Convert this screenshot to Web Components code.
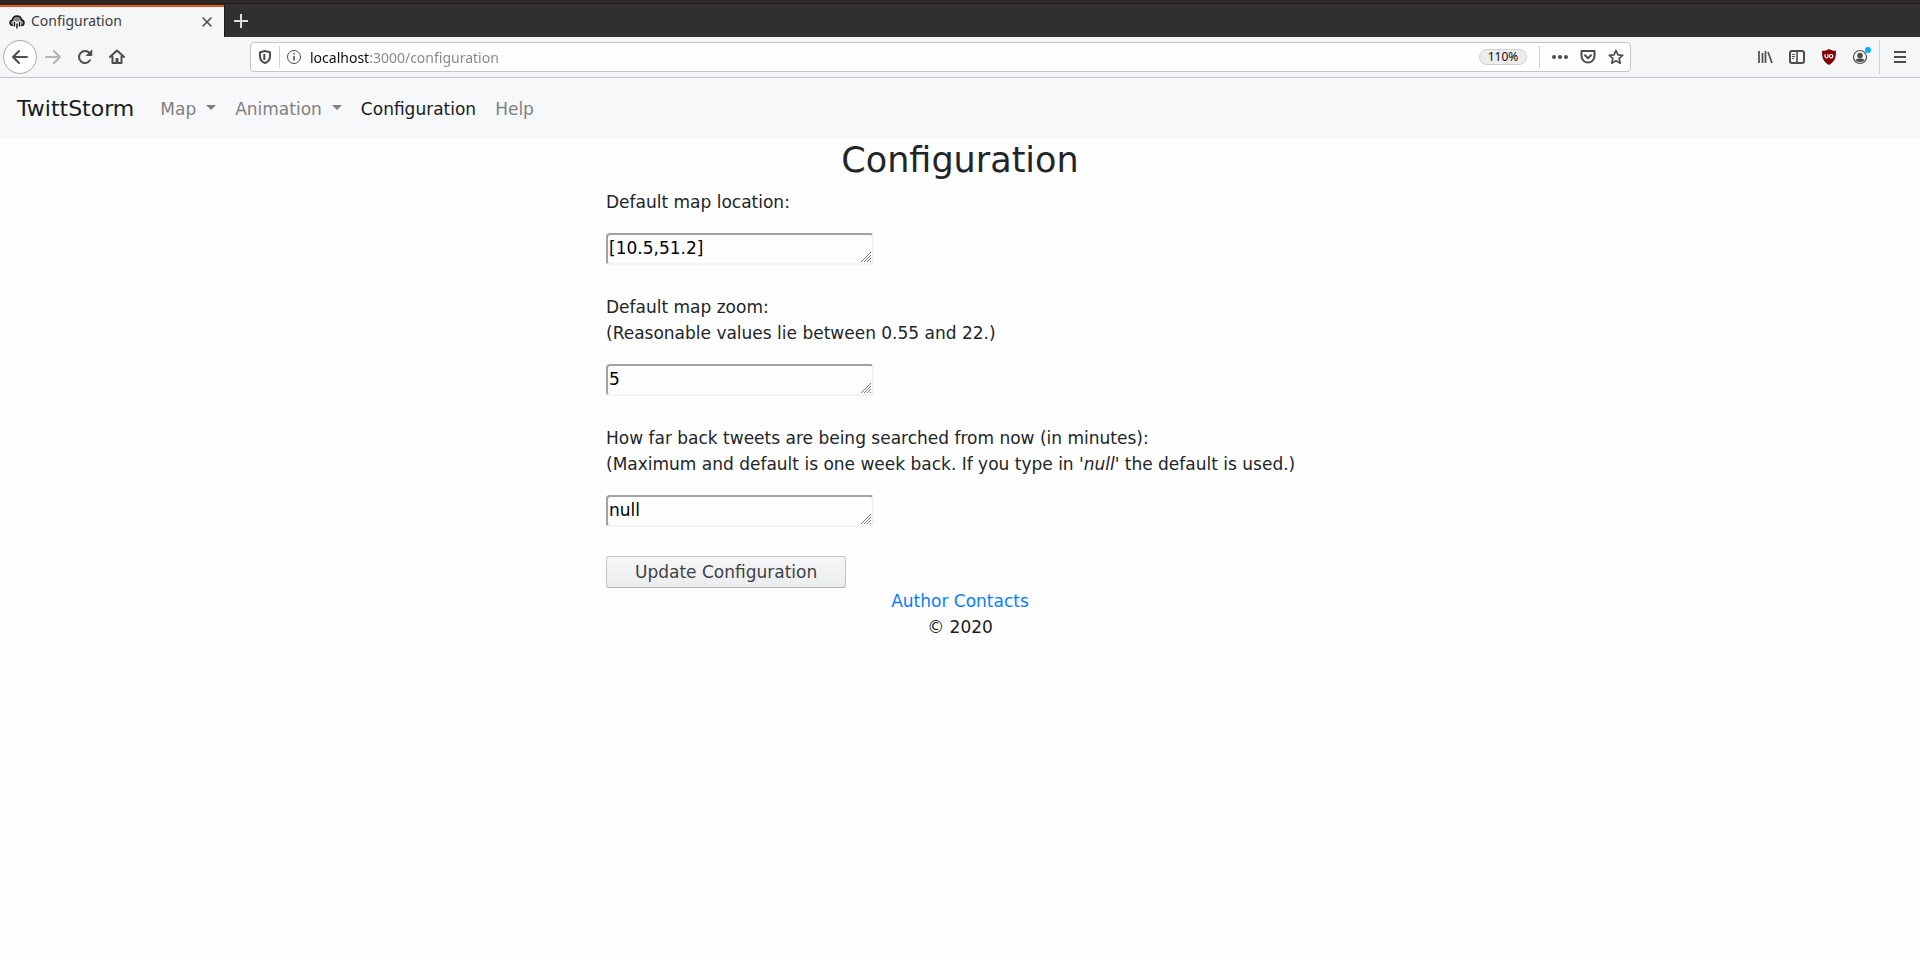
<!DOCTYPE html>
<html lang="en">
<head>
<meta charset="utf-8">
<title>Configuration</title>
<style>
  html { --chrome: #f5f6f8; --ink: #4d4d4e; --line: #c3c5c9; background: #fefefe; }
  body { margin: 0; font-family: "DejaVu Sans", sans-serif; font-size: 17px; line-height: 26px; color: #212529; }
</style>
</head>
<body>
<tab-strip><browser-tab>Configuration</browser-tab></tab-strip>
<tool-bar></tool-bar>
<site-nav>
  <nav-item kind="menu">Map</nav-item>
  <nav-item kind="menu">Animation</nav-item>
  <nav-item kind="active">Configuration</nav-item>
  <nav-item>Help</nav-item>
</site-nav>
<config-page>
  <config-field value="[10.5,51.2]">Default map location:</config-field>
  <config-field value="5">Default map zoom:<br>(Reasonable values lie between 0.55 and 22.)</config-field>
  <config-field value="null">How far back tweets are being searched from now (in minutes):<br>(Maximum and default is one week back. If you type in '<i>null</i>' the default is used.)</config-field>
</config-page>
<site-footer></site-footer>

<script>
const define = (name, html) => customElements.define(name, class extends HTMLElement {
  constructor() {
    super();
    this.attachShadow({ mode: 'open' }).innerHTML = html;
  }
});

const iconButton = `
  button { display: flex; align-items: center; justify-content: center; border: 0; padding: 0; margin: 0; background: none; color: var(--ink); }
  svg { display: block; fill: none; stroke: currentColor; stroke-width: 2; stroke-linecap: round; stroke-linejoin: round; }`;

define('tab-strip', `
  <style>${iconButton}
    :host { display: flex; height: 37px; box-sizing: border-box; padding-top: 5px; background: #322f30; box-shadow: inset 0 3px #2c2927, inset 0 4px #1f1d1d; }
    button { width: 34px; height: 31px; color: #dededf; }
    svg { stroke-linecap: butt; }
  </style>
  <slot></slot>
  <button aria-label="New tab"><svg width="16" height="16" viewBox="0 0 16 16"><path d="M8 1v14M1 8h14"/></svg></button>`);

define('browser-tab', `
  <style>${iconButton}
    :host { display: flex; align-items: center; width: 224px; box-sizing: border-box; padding: 0 9px; gap: 6px; background: var(--chrome); border-top: 2px solid #e95420; box-shadow: 1px 0 #1c1a1b; font: 14px/18px "Noto Sans", sans-serif; color: #3c3c3d; }
    span { flex: 1; padding-bottom: 2px; }
    button { width: 16px; height: 16px; }
    .close { stroke-width: 1.6; }
  </style>
  <svg width="16" height="14" viewBox="0 0 16 14">
    <path d="M3.500 10.500C2 10.300 1 9.300 1 7.800c0-1.500 1-2.500 2.500-2.800C3.800 2.500 5.500 1 8 1s4.200 1.500 4.600 4c1.500.2 2.400 1.300 2.400 2.800s-1 2.600-2.500 2.800" style="fill:#8a8a8a;stroke:#151515;stroke-width:1.500"/>
    <path d="M5.500 7v6M8 8v6M10.500 7v6" style="stroke:#fff;stroke-width:2.600"/>
    <path d="M5.500 7.500v3.500M8 9v4M10.500 7.500v3.500" style="stroke:#111;stroke-width:1.400"/>
  </svg>
  <span><slot></slot></span>
  <button aria-label="Close tab"><svg class="close" width="12" height="12" viewBox="0 0 12 12"><path d="M2 2l8 8M10 2l-8 8"/></svg></button>`);

define('tool-bar', `
  <style>${iconButton}
    :host { display: flex; align-items: center; height: 41px; box-sizing: border-box; padding: 0 0 0 3px; background: var(--chrome); border-bottom: 1px solid var(--line); font-family: "Noto Sans", sans-serif; }
    .tools { display: flex; align-items: center; }
    .tools button { width: 32px; height: 32px; }
    .tools .back { width: 34px; height: 34px; box-sizing: border-box; border: 1px solid #a9a9ab; border-radius: 50%; background: #fefefe; }
    .tools .off { color: #b5b5b7; }
    .left { flex: 0 0 247px; }
    .right { flex: 1; justify-content: flex-end; }
    .url { flex: 0 1 1381px; display: flex; align-items: center; height: 30px; box-sizing: border-box; border: 1px solid var(--line); border-radius: 4px; background: #fefefe; }
    .url button { width: 28px; height: 28px; }
    hr { width: 1px; height: 22px; border: 0; margin: 0; background: #cfd0d3; }
    input { flex: 1; min-width: 0; border: 0; padding: 2px 0 0; margin-left: 2px; outline: 0; font: 14px/20px "Noto Sans", sans-serif;
      background: linear-gradient(90deg, #0c0c0d 59px, #858586 59px); -webkit-background-clip: text; background-clip: text; -webkit-text-fill-color: transparent; }
    .url .zoom { width: 48px; height: 16px; box-sizing: border-box; border: 1px solid #cfcfd2; border-radius: 8px; background: #ededee; color: #0c0c0d; font: 12px/14px "Noto Sans", sans-serif; margin-right: 12px; }
    .menu { display: flex; align-items: center; margin-left: 2px; }
    .menu .dots { width: 36px; }
    .menu .pocket { width: 20px; margin-right: 4px; }
    .tall { height: 34px; margin-left: 2px; }
    .tools .burger { width: 40px; }
  </style>
  <div class="tools left">
    <button class="back" aria-label="Back"><svg width="18" height="16" viewBox="0 0 18 16"><path d="M16 8H2M8 2L2 8l6 6"/></svg></button>
    <button class="off" aria-label="Forward"><svg width="18" height="16" viewBox="0 0 18 16"><path d="M2 8h14M10 2l6 6-6 6"/></svg></button>
    <button aria-label="Reload"><svg width="16" height="16" viewBox="0 0 16 16"><path d="M13 11.300A6 6 0 1 1 12.500 4"/><path d="M14.800 1.500v5H9.800z" fill="currentColor" stroke-width="1"/></svg></button>
    <button aria-label="Home"><svg width="16" height="16" viewBox="0 0 16 16"><path d="M1 8l7-6.500L15 8M3.500 7.500V14h9V7.500"/><path d="M7.500 13v-3h1v3z" fill="currentColor"/></svg></button>
  </div>
  <div class="url">
    <button aria-label="Tracking protection"><svg width="14" height="16" viewBox="0 0 14 16"><path d="M7 2L12 3.200V7c0 3.500-2 6-5 7-3-1-5-3.500-5-7V3.200z"/><path d="M6.300 5v6" stroke-linecap="butt"/></svg></button>
    <hr>
    <button aria-label="Site information"><svg width="16" height="16" viewBox="0 0 16 16"><circle cx="8" cy="8" r="6.500" style="stroke-width:1"/><path d="M8 7.500v3.500M8 4.800v.1" style="stroke-width:1.600"/></svg></button>
    <input aria-label="Address" value="localhost:3000/configuration" spellcheck="false">
    <button class="zoom">110%</button>
    <hr>
    <div class="menu">
      <button class="dots" aria-label="Page actions"><svg width="16" height="6" viewBox="0 0 16 6"><path d="M2 3h.01M8 3h.01M14 3h.01" style="stroke-width:4"/></svg></button>
      <button class="pocket" aria-label="Save to Pocket"><svg width="16" height="16" viewBox="0 0 16 16"><path d="M1.500 2h13v5a6.500 6.500 0 0 1-13 0zM5 6.300l3 3 3-3"/></svg></button>
      <button aria-label="Bookmark"><svg width="16" height="16" viewBox="0 0 16 16"><path d="M8 1.500l2 4.300 4.700.5-3.500 3.100 1 4.800L8 11.800l-4.200 2.400 1-4.800L1.300 6.300 6 5.800z" style="stroke-width:1.700"/></svg></button>
    </div>
  </div>
  <div class="tools right">
    <button aria-label="Library"><svg width="16" height="16" viewBox="0 0 16 16"><path d="M2 2v12M5.500 4v10M8.500 2v12M11 3l4 11" style="stroke-linecap:butt;stroke-width:1.700"/></svg></button>
    <button aria-label="Sidebars"><svg width="16" height="14" viewBox="0 0 16 14"><rect x="1" y="1" width="14" height="12" rx="2"/><path d="M8 1v12" style="stroke-width:1.600"/><path d="M3.500 4.500h2M3.500 6.500h2M3.500 8.500h1" style="stroke-width:1"/></svg></button>
    <button aria-label="Ad blocker"><svg width="14" height="16" viewBox="0 0 14 16"><path d="M7 0c2 1.300 4 1.800 7 1.800C14 9 13 12.500 7 16 1 12.500 0 9 0 1.800 3 1.800 5 1.300 7 0z" style="fill:#800000;stroke:none"/><path d="M3 5.500v1.800c0 2 3 2 3 0V5.500" style="stroke:#fff;stroke-width:1.200"/><circle cx="9.200" cy="7.200" r="1.700" style="stroke:#fff;stroke-width:1.200"/></svg></button>
    <button aria-label="Account"><svg width="20" height="20" viewBox="0 0 20 20"><circle cx="9" cy="10" r="6.500" style="stroke-width:1.200"/><path d="M4.500 13c.8-1.500 2.500-1.500 4.500-1.500s3.700 0 4.500 1.500c-2.500 3-6.500 3-9 0z" style="fill:currentColor;stroke:none"/><circle cx="9" cy="8.500" r="2.800" style="fill:currentColor;stroke:none"/><circle cx="17" cy="3" r="3" style="fill:#00b3f4;stroke:none"/></svg></button>
    <hr class="tall">
    <button class="burger" aria-label="Open menu"><svg width="12" height="12" viewBox="0 0 12 12" style="stroke-linecap:butt"><path d="M0 1h12M0 6h12M0 11h12"/></svg></button>
  </div>`);

define('site-nav', `
  <style>
    :host { display: block; background: #f7f8fa; }
    nav { display: flex; align-items: center; gap: 1px; height: 61px; padding: 0 17px; }
    .brand { color: #191c1e; font-size: 22px; text-decoration: none; margin-right: 16px; }
  </style>
  <nav><a class="brand" href="#">TwittStorm</a><slot></slot></nav>`);

customElements.define('nav-item', class extends HTMLElement {
  constructor() {
    super();
    const kind = this.getAttribute('kind');
    const menu = kind === 'menu';
    const tag = menu ? 'button aria-haspopup="true"' : 'a href="#"';
    this.attachShadow({ mode: 'open' }).innerHTML = `
      <style>
        :host { display: block; color: ${kind === 'active' ? '#191c1e' : '#7f8081'}; }
        a, button { display: flex; align-items: center; gap: 10px; padding: 0 9px; border: 0; background: none; font: inherit; color: inherit; text-decoration: none; }
        i { border: 5px solid transparent; border-top-color: currentColor; border-bottom: 0; margin-bottom: 2px; }
      </style>
      <${tag}><slot></slot>${menu ? '<i></i>' : ''}</${menu ? 'button' : 'a'}>`;
  }
});

customElements.define('config-field', class extends HTMLElement {
  constructor() {
    super();
    const root = this.attachShadow({ mode: 'open' });
    root.innerHTML = `
      <style>
        :host { display: block; margin-bottom: 29px; }
        label { display: block; margin-bottom: 18px; }
        textarea { display: block; width: 268px; height: 32px; box-sizing: border-box; margin: 0; padding: 0 1px; border: 2px solid; border-color: #a2a2a2 #f3f3f3 #f3f3f3 #a2a2a2; border-radius: 4px; background: #fefefe; font: inherit; color: #000; overflow: hidden; }
        textarea::-webkit-resizer { background: url("data:image/svg+xml,%3Csvg xmlns='http://www.w3.org/2000/svg' width='12' height='12'%3E%3Cpath d='M1 11L11 1M4 11l7-7M7 11l4-4M10 11l1-1' stroke='%23777'/%3E%3C/svg%3E") right bottom no-repeat; }
      </style>
      <label for="box"><slot></slot></label>
      <textarea id="box" rows="1" spellcheck="false"></textarea>`;
    root.querySelector('textarea').value = this.getAttribute('value');
  }
});

define('config-page', `
  <style>
    :host { display: block; }
    h1 { margin: 0 0 8px; font-size: 35px; line-height: 42px; font-weight: 400; text-align: center; }
    form { max-width: 708px; margin: 0 auto; }
    button { display: block; height: 32px; padding: 0 28px; border: 1px solid #bfc2cb; border-bottom-color: #b0b4bd; border-radius: 3px; background: linear-gradient(#f6f7f8, #ebecee); font: inherit; color: #3e4143; }
  </style>
  <main>
    <h1>Configuration</h1>
    <form><slot></slot><button type="button">Update Configuration</button></form>
  </main>`);

define('site-footer', `
  <style>
    :host { display: block; text-align: center; }
    a { color: #087dfb; text-decoration: none; }
    div { color: #191c1e; }
  </style>
  <footer><a href="#">Author Contacts</a><div>© 2020</div></footer>`);
</script>
</body>
</html>
